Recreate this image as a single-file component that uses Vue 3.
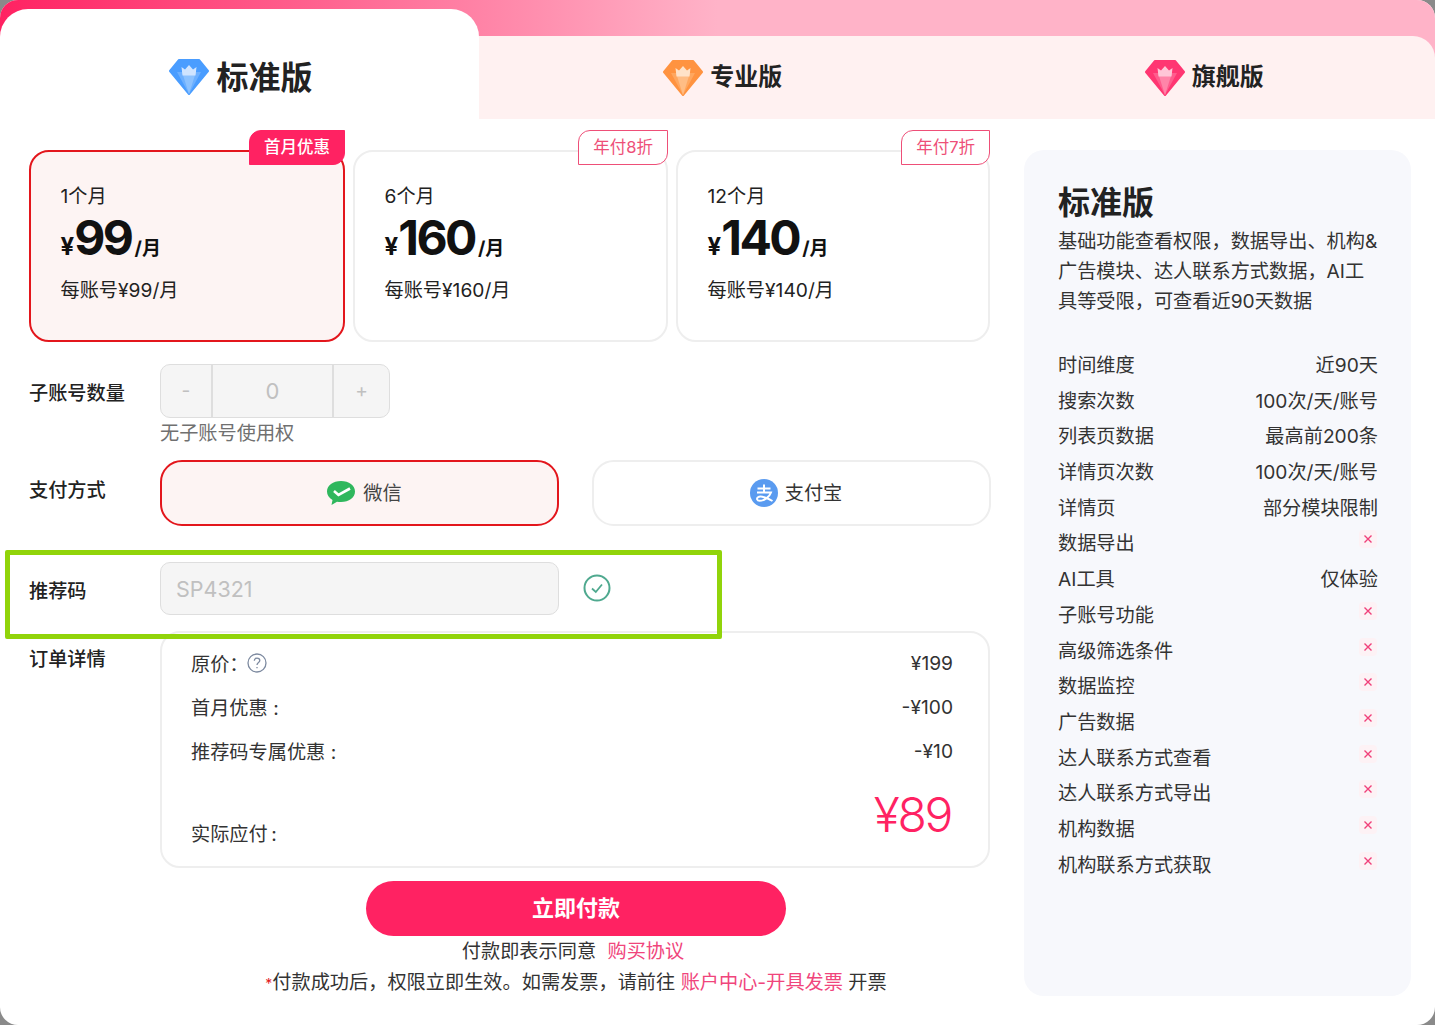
<script setup>
const diamonds = {
  blue: { a: '#4a9dff', b: '#6db0ff', c: '#8cc2ff', d: '#cfe4ff' },
  orange: { a: '#ff9340', b: '#ffa75f', c: '#ffbd85', d: '#ffe2c8' },
  pink: { a: '#ff3672', b: '#ff5c8d', c: '#ff85a9', d: '#ffc6d7' }
}
const tabs = [
  { name: '标准版', key: 'blue', active: true },
  { name: '专业版', key: 'orange' },
  { name: '旗舰版', key: 'pink' }
]
const plans = [
  { term: '1个月', price: '99', per: '每账号¥99/月', tag: '首月优惠', active: true },
  { term: '6个月', price: '160', per: '每账号¥160/月', tag: '年付8折' },
  { term: '12个月', price: '140', per: '每账号¥140/月', tag: '年付7折' }
]
const features = [
  ['时间维度', '近90天'],
  ['搜索次数', '100次/天/账号'],
  ['列表页数据', '最高前200条'],
  ['详情页次数', '100次/天/账号'],
  ['详情页', '部分模块限制'],
  ['数据导出', ''],
  ['AI工具', '仅体验'],
  ['子账号功能', ''],
  ['高级筛选条件', ''],
  ['数据监控', ''],
  ['广告数据', ''],
  ['达人联系方式查看', ''],
  ['达人联系方式导出', ''],
  ['机构数据', ''],
  ['机构联系方式获取', '']
]
</script>

<template>
  <div class="page">
    <header class="tabs">
      <div v-for="t in tabs" :key="t.name" class="tab" :class="{ active: t.active }">
        <svg class="gem" viewBox="0 0 40 36">
          <path d="M10 1H30L39 12L20 35L1 12Z" :fill="diamonds[t.key].a" :stroke="diamonds[t.key].a" stroke-width="2" stroke-linejoin="round" />
          <path d="M8 13H32L20 35Z" :fill="diamonds[t.key].b" />
          <path d="M13 13H27L20 35Z" :fill="diamonds[t.key].c" />
          <path d="M12.500 8L16 10.500L20 6L24 10.500L27.500 8L26.500 16.500H13.500Z" :fill="diamonds[t.key].d" stroke-linejoin="round" />
        </svg>
        <span>{{ t.name }}</span>
      </div>
    </header>

    <main class="main">
      <section class="left">
        <div class="plans">
          <div v-for="p in plans" :key="p.term" class="plan" :class="{ active: p.active }">
            <span class="tag">{{ p.tag }}</span>
            <div class="term">{{ p.term }}</div>
            <div class="price"><i>¥</i><b>{{ p.price }}</b><em>/月</em></div>
            <div class="per">{{ p.per }}</div>
          </div>
        </div>

        <div class="row sub-row">
          <label class="label sub-label">子账号数量</label>
          <div>
            <div class="stepper">
              <span class="step">-</span>
              <span class="num">0</span>
              <span class="step plus">+</span>
            </div>
            <div class="hint">无子账号使用权</div>
          </div>
        </div>

        <div class="row pay-row">
          <label class="label pay-label">支付方式</label>
          <div class="pays">
            <div class="pay active">
              <svg class="pay-icon" viewBox="0 0 30 26">
                <path d="M15 1C7 1 1 5.500 1 11.500C1 15 3 18 6.500 20L5.500 25L11 21.700C12.300 22 13.600 22 15 22C23 22 29 17.500 29 11.500C29 5.500 23 1 15 1Z" fill="#2fb75d" />
                <path d="M8 11L12.500 15L24 8.500" fill="none" stroke="#fff" stroke-width="2.600" />
              </svg>
              <span>微信</span>
            </div>
            <div class="pay">
              <svg class="pay-icon ali" viewBox="0 0 28 28">
                <circle cx="14" cy="14" r="14" fill="#5a9bf0" />
                <path d="M7.500 9.500H20.500M14 5.500V13M7 13.500H21C19.500 18 14 21.800 9.500 21.800C7 21.800 6.300 19.500 8 18.300C10.500 16.500 17 18.500 22.500 22" fill="none" stroke="#fff" stroke-width="2" />
              </svg>
              <span>支付宝</span>
            </div>
          </div>
        </div>

        <div class="row code-row">
          <label class="label code-label">推荐码</label>
          <div class="code">SP4321</div>
          <svg class="ok" viewBox="0 0 28 28">
            <circle cx="14" cy="14" r="12.500" fill="none" stroke="#4fa98f" stroke-width="2" />
            <path d="M9 14.500L12.800 18L19 10.500" fill="none" stroke="#4fa98f" stroke-width="1.800" />
          </svg>
          <div class="highlight"></div>
        </div>

        <div class="row order-row">
          <label class="label order-label">订单详情</label>
          <div class="order">
            <div class="line first">
              <span class="line-name">原价：
                <svg class="help" viewBox="0 0 20 20">
                  <circle cx="10" cy="10" r="9" fill="none" stroke="#7d8aa0" stroke-width="1.300" />
                  <path d="M7.300 7.800C7.300 6.200 8.500 5.200 10 5.200C11.600 5.200 12.800 6.200 12.800 7.600C12.800 9.600 10 9.600 10 12M10 14V15.200" fill="none" stroke="#7d8aa0" stroke-width="1.300" />
                </svg>
              </span>
              <span>¥199</span>
            </div>
            <div class="line"><span>首月优惠&nbsp;:</span><span>-¥100</span></div>
            <div class="line"><span>推荐码专属优惠&nbsp;:</span><span>-¥10</span></div>
            <div class="total">
              <span>实际应付&thinsp;:</span>
              <strong>¥89</strong>
            </div>
          </div>
        </div>

        <button class="buy"><span>立即付款</span></button>
        <div class="agree">付款即表示同意 <a>购买协议</a></div>
        <div class="note"><s>*</s>付款成功后，权限立即生效。如需发票，请前往 <a>账户中心-开具发票</a> 开票</div>
      </section>

      <aside class="panel">
        <h2>标准版</h2>
        <p>基础功能查看权限，数据导出、机构&amp;广告模块、达人联系方式数据，AI工具等受限，可查看近90天数据</p>
        <ul>
          <li v-for="f in features" :key="f[0]">
            <span>{{ f[0] }}</span>
            <span v-if="f[1]">{{ f[1] }}</span>
            <span v-else class="no">
              <svg viewBox="0 0 10 10"><path d="M1.500 1.500L8.500 8.500M8.500 1.500L1.500 8.500" stroke="#f0407a" stroke-width="1.400" /></svg>
            </span>
          </li>
        </ul>
      </aside>
    </main>
  </div>
</template>

<style>
html, body { margin: 0; background: #8a8a8a; }
</style>

<style scoped>
.page {
  width: 1435px;
  height: 1025px;
  background: #fff;
  border-radius: 18px;
  overflow: hidden;
  font-family: Inter, "Noto Sans CJK SC", sans-serif;
  font-size: 19.200px;
  color: #222;
  box-sizing: border-box;
}
.tabs {
  height: 119px;
  display: flex;
  align-items: flex-end;
  background: linear-gradient(90deg, #ff2262 0%, #ffb3c8 50%, #ffb3c8 100%);
}
.tab {
  flex: 1;
  height: 83px;
  background: #fff1f1;
  display: flex;
  align-items: center;
  justify-content: center;
  gap: 7px;
  padding-left: 13px;
  box-sizing: border-box;
  font-size: 24px;
  font-weight: 700;
  color: #222;
}
.tab span { margin-top: -6px; }
.tab:last-child { border-top-right-radius: 22px; padding-left: 20px; }
.tab.active {
  flex: 0 0 479px;
  height: 110px;
  background: #fff;
  border-radius: 28px 28px 0 0;
  font-size: 32px;
  padding: 26px 0 0 3px;
}
.tab.active span { margin-top: -4px; }
.gem { width: 40px; height: 36px; flex: none; }
.main {
  display: grid;
  grid-template-columns: 961px 387px;
  column-gap: 34px;
  padding: 31px 0 0 29px;
}
.left { position: relative; }
.plans {
  display: grid;
  grid-template-columns: 316px 315px 314px;
  column-gap: 8px;
}
.plan {
  position: relative;
  height: 192px;
  box-sizing: border-box;
  border: 2px solid #eeeeee;
  border-radius: 20px;
  padding: 30px 0 0 29.500px;
}
.plan.active { background: #fdf4f3; border-color: #e3161c; }
.tag {
  position: absolute;
  top: -22px;
  right: -2px;
  height: 35px;
  line-height: 33px;
  padding: 0 14px;
  box-sizing: border-box;
  font-size: 16.500px;
  color: #ee4f78;
  background: #fff;
  border: 1px solid #ee4f78;
  border-radius: 12px 0 12px 0;
}
.plan.active .tag { background: #ff2262; color: #fff; border-color: #ff2262; font-weight: 500; }
.term { line-height: 28px; color: #222; }
.price { display: flex; align-items: baseline; height: 52px; margin-top: 2px; color: #111; }
.price i { font-style: normal; font-weight: 700; font-size: 24px; }
.price b { font-size: 48px; font-weight: 700; line-height: 52px; letter-spacing: -2.500px; }
.price em { font-style: normal; font-weight: 700; font-size: 19px; margin-left: 3px; }
.per { margin-top: 12px; line-height: 28px; color: #222; }
.row { display: flex; }
.label { flex: 0 0 131px; font-weight: 500; color: #222; }
.sub-row { margin-top: 22px; }
.sub-label { line-height: 58px; }
.stepper {
  width: 230px;
  height: 54px;
  box-sizing: border-box;
  background: #f5f5f5;
  border: 1px solid #dedede;
  border-radius: 10px;
  display: flex;
  color: #c0c0c0;
}
.step { width: 50px; text-align: center; line-height: 50px; }
.plus { width: 55px; }
.num {
  flex: 1;
  text-align: center;
  line-height: 52px;
  font-size: 22px;
  border-left: 2px solid #dedede;
  border-right: 2px solid #dedede;
}
.hint { line-height: 30px; color: #707070; }
.pay-row { margin-top: 12px; }
.pay-label { line-height: 60px; }
.pays { display: flex; gap: 33px; }
.pay {
  width: 399px;
  height: 66px;
  box-sizing: border-box;
  border: 2px solid #eeeeee;
  border-radius: 22px;
  display: flex;
  align-items: center;
  justify-content: center;
  gap: 7px;
  padding-left: 9px;
  color: #333;
}
.pay span { margin-top: -2px; }
.pay.active { background: #fdf4f3; border-color: #e3161c; color: #444; }
.pay-icon { width: 30px; height: 26px; }
.pay-icon.ali { width: 28px; height: 28px; }
.code-row { position: relative; margin-top: 36px; align-items: center; }
.code-label { padding-top: 2px; box-sizing: border-box; }
.code {
  width: 399px;
  height: 53px;
  box-sizing: border-box;
  background: #f5f5f5;
  border: 1px solid #dedede;
  border-radius: 10px;
  padding-left: 15px;
  line-height: 53px;
  font-size: 21.500px;
  color: #c0c0c0;
}
.ok { width: 28px; height: 28px; margin: -2px 0 0 24px; }
.highlight {
  position: absolute;
  left: -24px;
  top: -12px;
  width: 717px;
  height: 89px;
  box-sizing: border-box;
  border: 5px solid #91d40a;
  border-radius: 2px;
  z-index: 2;
  pointer-events: none;
}
.order-row { margin-top: 16px; }
.order-label { line-height: 56px; }
.order {
  flex: 1;
  height: 237px;
  box-sizing: border-box;
  border: 2px solid #eeeeee;
  border-radius: 20px;
  padding: 0 35px 0 29px;
  color: #333;
}
.line { display: flex; justify-content: space-between; align-items: center; height: 44px; }
.line.first { margin-top: 8px; }
.line-name { display: flex; align-items: center; }
.help { width: 20px; height: 20px; margin-left: -2px; }
.total { display: flex; justify-content: space-between; align-items: flex-end; margin-top: 11px; }
.total span { line-height: 28px; margin-bottom: -2px; }
.total strong { font-size: 48px; font-weight: 300; color: #ff2262; line-height: 62px; letter-spacing: -2.300px; margin-right: 2px; }
.buy {
  display: block;
  width: 420px;
  height: 55px;
  margin: 13px 0 0 337px;
  padding: 0 0 6px;
  border: 0;
  border-radius: 28px;
  background: #ff2262;
  color: #fff;
  font-family: inherit;
  font-size: 22px;
  font-weight: 700;
}
.agree, .note { text-align: center; color: #333; padding-left: 133px; }
.agree { line-height: 30px; margin-top: 0; padding-right: 6px; }
.note { line-height: 30px; margin-top: 1px; }
a { color: #f0457c; margin-left: 6px; }
.note a { margin-left: 0; }
s { color: #e3161c; text-decoration: none; font-size: 14px; }
.panel {
  height: 846px;
  box-sizing: border-box;
  background: #f7f8fc;
  border-radius: 20px;
  padding: 30px 33px 0 34px;
  color: #333;
}
h2 { margin: 0; font-size: 32px; line-height: 46px; font-weight: 700; color: #222; }
p { margin: 0; line-height: 30px; height: 90px; }
ul { margin: 32px 0 0; padding: 0; list-style: none; }
li { display: flex; justify-content: space-between; height: 35.700px; line-height: 35.700px; }
.no {
  width: 18px;
  height: 18px;
  margin: 0 1px 0 0;
  display: flex;
  align-items: center;
  justify-content: center;
  background: #fdf2f5;
  border-radius: 4px;
  position: relative;
  top: 4px;
}
.no svg { width: 10px; height: 10px; }
</style>
